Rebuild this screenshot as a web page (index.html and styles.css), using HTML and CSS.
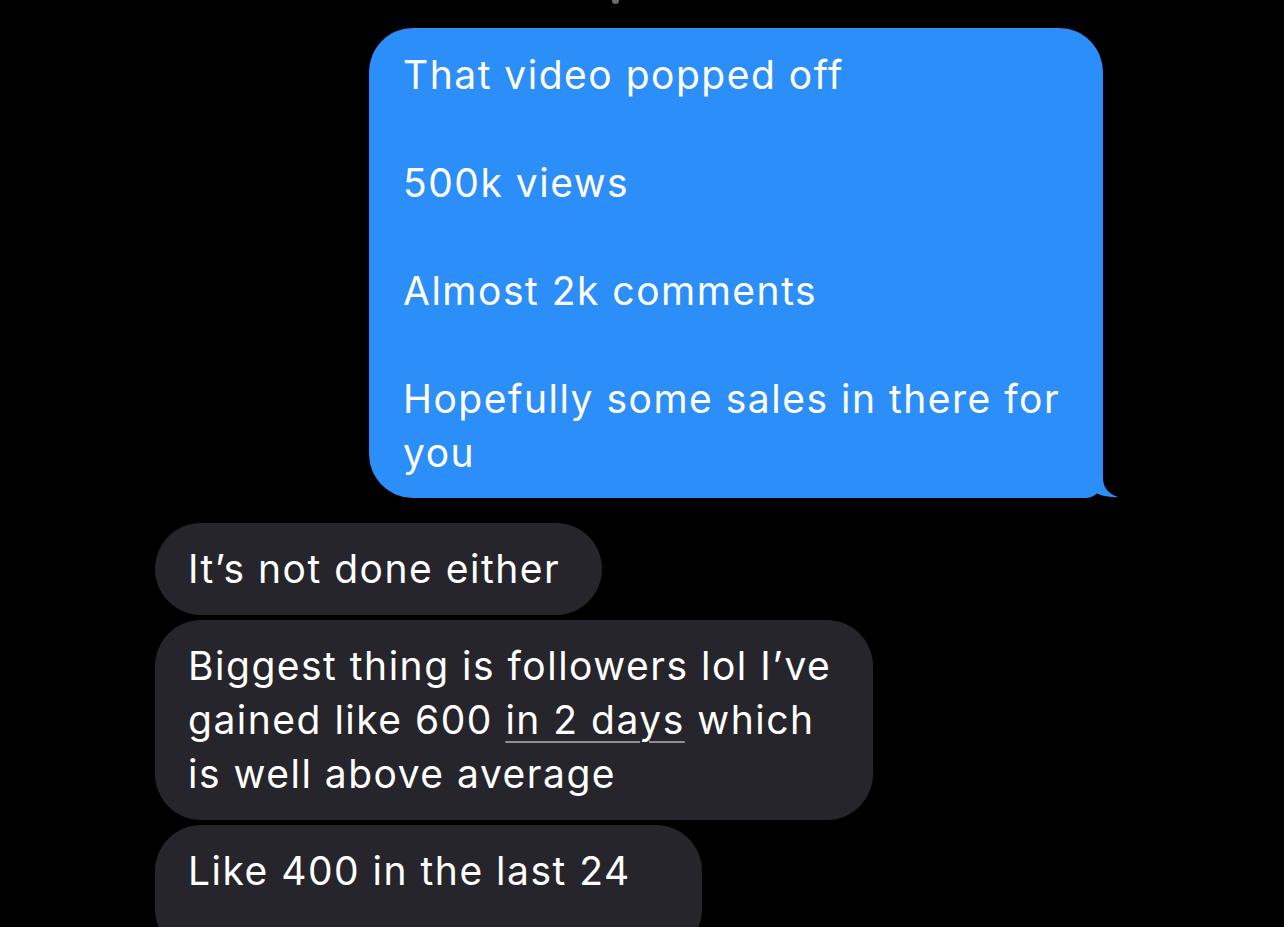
FILE: index.html
```html
<!DOCTYPE html>
<html>
<head>
<meta charset="utf-8">
<link rel="stylesheet" href="styles.css">
</head>
<body>
<div class="thread">
  <div class="top-row"><span class="top-mark"></span></div>
  <div class="row row-out">
    <div class="bubble bubble-out">
      <p>That video popped off</p>
      <p>500k views</p>
      <p>Almost 2k comments</p>
      <p>Hopefully some sales in there for you</p>
      <svg class="tail" width="50" height="40" viewBox="0 0 50 40" aria-hidden="true">
        <path d="M0,0 L35,0 L35,20 C35,30 41,36 50,39 C42,40 28,37 19,30 C13,36 6,40 0,40 Z" fill="#2c8ef8"/>
      </svg>
    </div>
  </div>
  <div class="group-in">
    <div class="bubble bubble-in">It’s not done either</div>
    <div class="bubble bubble-in wide">Biggest thing is followers lol I’ve gained like 600 <span class="link">in 2 days</span> which is well above average</div>
    <div class="bubble bubble-in last">Like 400 in the last 24</div>
  </div>
</div>
</body>
</html>
```
FILE: styles.css
```css
html, body {
  margin: 0;
  padding: 0;
  background: #000;
  height: 927px;
  overflow: hidden;
}
body {
  font-family: "Inter", "Liberation Sans", sans-serif;
  color: #fff;
  -webkit-font-smoothing: antialiased;
}
.thread {
  display: flex;
  flex-direction: column;
  height: 927px;
  overflow: hidden;
}
.top-row {
  height: 28px;
  flex: none;
  display: flex;
}
.top-mark {
  margin-left: 612px;
  width: 7px;
  height: 4px;
  border-radius: 0 0 4px 4px;
  background: #6c6c70;
}
.row-out {
  display: flex;
  flex: none;
  padding-left: 369px;
}
.bubble {
  font-size: 39px;
  line-height: 54px;
  letter-spacing: 1.5px;
}
.bubble-out {
  position: relative;
  width: 734px;
  box-sizing: border-box;
  background: #2c8ef8;
  border-radius: 44px 44px 18px 44px;
  padding: 20px 30px 18px 34px;
}
.bubble-out p {
  margin: 0 0 54px 0;
}
.bubble-out p:last-of-type {
  margin-bottom: 0;
}
.tail {
  position: absolute;
  right: -15px;
  bottom: 0;
  display: block;
}
.group-in {
  display: flex;
  flex-direction: column;
  align-items: flex-start;
  gap: 5px;
  padding-left: 155px;
  margin-top: 25px;
}
.bubble-in {
  background: #26252b;
  border-radius: 46px;
  padding: 19px 42px 19px 33px;
  box-sizing: border-box;
}
.wide {
  max-width: 718px;
  padding-right: 36px;
}
.link {
  text-decoration: underline;
  text-decoration-color: #8e8e93;
  text-decoration-thickness: 2px;
  text-underline-offset: 7px;
}
.last {
  width: 547px;
  min-height: 130px;
}
```
